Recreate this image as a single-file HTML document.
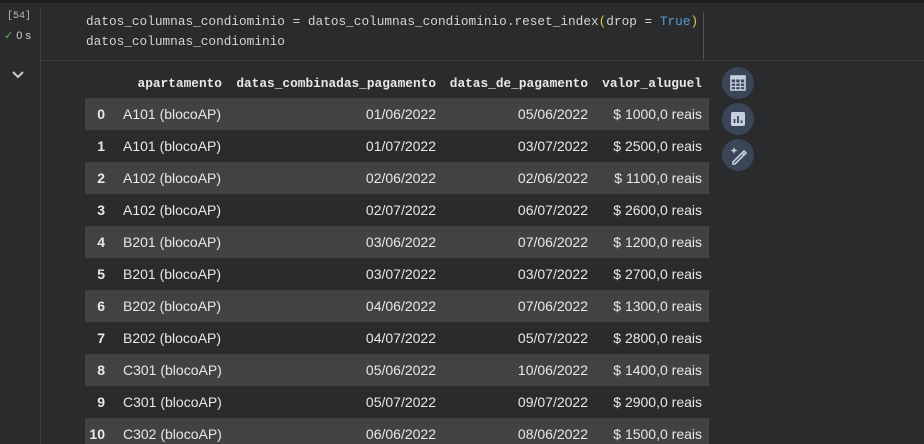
<!DOCTYPE html>
<html><head><style>
html,body{margin:0;width:924px;height:444px;overflow:hidden}
body{background:#2a2b2d;font-family:"Liberation Sans",sans-serif;position:relative}
.top{position:absolute;left:0;top:0;width:924px;height:3px;background:#1e1e1e}
.gut{position:absolute;left:40px;top:8px;width:1px;height:436px;background:#3c3d40}
.sep{position:absolute;left:40px;top:60px;width:884px;height:1px;background:#3c3d40}
.vl{position:absolute;left:703px;top:12px;width:1px;height:47px;background:#555}
.code{position:absolute;left:86px;top:12px;font:12.75px/20px "Liberation Mono",monospace;color:#d4d4d4;white-space:pre}
.num{position:absolute;left:7px;top:11px;font:10px "Liberation Mono",monospace;color:#bbb}
.ok{position:absolute;left:4px;top:29px;font:11px "Liberation Sans",sans-serif;color:#ccc}
.row{position:absolute;left:85px;width:624px;height:32px;font-size:14px;color:#e8e8e8}
.row.s{background:#424242}
.row span{position:absolute;top:8px}
.i{font-weight:bold;right:604px}
.a{left:38px}.c2{right:273px}.c3{right:121px}.c4{right:7px}
.hd{position:absolute;top:76px;font:bold 12.8px "Liberation Mono",monospace;color:#e8e8e8}
.btn{position:absolute;left:722px;width:32px;height:32px;border-radius:50%;background:#3b4558}
</style></head><body>
<div class="top"></div>
<div class="gut"></div><div class="sep"></div><div class="vl"></div>
<div class="num">[54]</div>
<div class="ok"><span style="color:#5cb85c">✓</span> 0 s</div>
<svg style="position:absolute;left:12px;top:71px" width="12" height="8"><path d="M1 1l5 5 5-5" stroke="#ccc" stroke-width="2" fill="none"/></svg>
<div class="code">datos_columnas_condiominio = datos_columnas_condiominio.reset_index<span style="color:#e6c84a">(</span>drop = <span style="color:#569cd6">True</span><span style="color:#e6c84a">)</span>
datos_columnas_condiominio</div>
<div class="hd" style="right:702px">apartamento</div>
<div class="hd" style="right:488px">datas_combinadas_pagamento</div>
<div class="hd" style="right:336px">datas_de_pagamento</div>
<div class="hd" style="right:222px">valor_aluguel</div>

<div class="row s" style="top:98px"><span class="i">0</span><span class="a">A101 (blocoAP)</span><span class="c2">01/06/2022</span><span class="c3">05/06/2022</span><span class="c4">$ 1000,0 reais</span></div>
<div class="row" style="top:130px"><span class="i">1</span><span class="a">A101 (blocoAP)</span><span class="c2">01/07/2022</span><span class="c3">03/07/2022</span><span class="c4">$ 2500,0 reais</span></div>
<div class="row s" style="top:162px"><span class="i">2</span><span class="a">A102 (blocoAP)</span><span class="c2">02/06/2022</span><span class="c3">02/06/2022</span><span class="c4">$ 1100,0 reais</span></div>
<div class="row" style="top:194px"><span class="i">3</span><span class="a">A102 (blocoAP)</span><span class="c2">02/07/2022</span><span class="c3">06/07/2022</span><span class="c4">$ 2600,0 reais</span></div>
<div class="row s" style="top:226px"><span class="i">4</span><span class="a">B201 (blocoAP)</span><span class="c2">03/06/2022</span><span class="c3">07/06/2022</span><span class="c4">$ 1200,0 reais</span></div>
<div class="row" style="top:258px"><span class="i">5</span><span class="a">B201 (blocoAP)</span><span class="c2">03/07/2022</span><span class="c3">03/07/2022</span><span class="c4">$ 2700,0 reais</span></div>
<div class="row s" style="top:290px"><span class="i">6</span><span class="a">B202 (blocoAP)</span><span class="c2">04/06/2022</span><span class="c3">07/06/2022</span><span class="c4">$ 1300,0 reais</span></div>
<div class="row" style="top:322px"><span class="i">7</span><span class="a">B202 (blocoAP)</span><span class="c2">04/07/2022</span><span class="c3">05/07/2022</span><span class="c4">$ 2800,0 reais</span></div>
<div class="row s" style="top:354px"><span class="i">8</span><span class="a">C301 (blocoAP)</span><span class="c2">05/06/2022</span><span class="c3">10/06/2022</span><span class="c4">$ 1400,0 reais</span></div>
<div class="row" style="top:386px"><span class="i">9</span><span class="a">C301 (blocoAP)</span><span class="c2">05/07/2022</span><span class="c3">09/07/2022</span><span class="c4">$ 2900,0 reais</span></div>
<div class="row s" style="top:418px"><span class="i">10</span><span class="a">C302 (blocoAP)</span><span class="c2">06/06/2022</span><span class="c3">08/06/2022</span><span class="c4">$ 1500,0 reais</span></div>

<div class="btn" style="top:67px"><svg width="32" height="32"><rect x="9" y="9" width="14" height="14" fill="none" stroke="#c6cfe0" stroke-width="1.6"/><rect x="9" y="9" width="14" height="3.5" fill="#c6cfe0"/><path d="M9 16h14M9 19.5h14M13.7 12v11M18.3 12v11" stroke="#c6cfe0" stroke-width="1.2"/></svg></div>
<div class="btn" style="top:103px"><svg width="32" height="32"><rect x="9" y="9" width="14" height="14" rx="1.5" fill="#c6cfe0"/><path d="M12.5 20v-4M16 20v-7M19.5 20v-2.5" stroke="#3b4558" stroke-width="1.8"/></svg></div>
<div class="btn" style="top:139px"><svg width="32" height="32"><path d="M11 23l9-9 2 2-9 9h-2z" fill="none" stroke="#c6cfe0" stroke-width="1.6"/><path d="M20 14l2-2 2 2-2 2" fill="none" stroke="#c6cfe0" stroke-width="1.6"/><path d="M12 8l1 2.5 2.5 1-2.5 1-1 2.5-1-2.5-2.5-1 2.5-1z" fill="#c6cfe0"/></svg></div>
</body></html>
